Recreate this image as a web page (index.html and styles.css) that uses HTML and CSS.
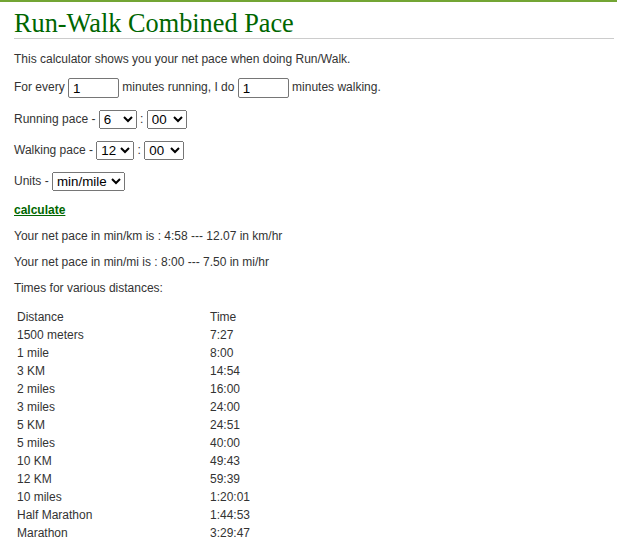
FILE: index.html
```html
<!DOCTYPE html>
<html>
<head>
<meta charset="utf-8">
<title>Run-Walk Combined Pace</title>
<link rel="stylesheet" href="styles.css">
</head>
<body>
<div class="page">
  <h1 class="title">Run-Walk Combined Pace</h1>
  <p>This calculator shows you your net pace when doing Run/Walk.</p>
  <p>For every <input class="num" type="text" value="1"> minutes running, I do <input class="num" type="text" value="1"> minutes walking.</p>
  <p>Running pace - <select class="sel sel-min">
      <option>4</option><option>5</option><option selected>6</option><option>7</option><option>8</option><option>9</option><option>10</option><option>11</option><option>12</option>
    </select> : <select class="sel sel-sec">
      <option selected>00</option><option>15</option><option>30</option><option>45</option>
    </select></p>
  <p>Walking pace - <select class="sel sel-min">
      <option>10</option><option>11</option><option selected>12</option><option>13</option><option>14</option><option>15</option>
    </select> : <select class="sel sel-sec">
      <option selected>00</option><option>15</option><option>30</option><option>45</option>
    </select></p>
  <p>Units - <select class="sel sel-units">
      <option selected>min/mile</option><option>min/km</option>
    </select></p>
  <p><a class="calc" href="#">calculate</a></p>
  <p>Your net pace in min/km is : 4:58 --- 12.07 in km/hr</p>
  <p>Your net pace in min/mi is : 8:00 --- 7.50 in mi/hr</p>
  <p>Times for various distances:</p>
  <table class="times">
    <tr><td class="dist">Distance</td><td>Time</td></tr>
    <tr><td class="dist">1500 meters</td><td>7:27</td></tr>
    <tr><td class="dist">1 mile</td><td>8:00</td></tr>
    <tr><td class="dist">3 KM</td><td>14:54</td></tr>
    <tr><td class="dist">2 miles</td><td>16:00</td></tr>
    <tr><td class="dist">3 miles</td><td>24:00</td></tr>
    <tr><td class="dist">5 KM</td><td>24:51</td></tr>
    <tr><td class="dist">5 miles</td><td>40:00</td></tr>
    <tr><td class="dist">10 KM</td><td>49:43</td></tr>
    <tr><td class="dist">12 KM</td><td>59:39</td></tr>
    <tr><td class="dist">10 miles</td><td>1:20:01</td></tr>
    <tr><td class="dist">Half Marathon</td><td>1:44:53</td></tr>
    <tr><td class="dist">Marathon</td><td>3:29:47</td></tr>
  </table>
</div>
</body>
</html>
```

FILE: styles.css
```css
html, body {
  margin: 0;
  padding: 0;
  background: #fff;
}
body {
  border-top: 2px solid #73a534;
  font-family: "Liberation Sans", Arial, sans-serif;
  font-size: 12px;
  color: #333;
}
.page {
  width: 600px;
  margin-left: 14px;
}
.title {
  margin: 0 0 13px 0;
  padding-top: 8px;
  font-family: "Liberation Serif", "Times New Roman", serif;
  font-size: 26.3px;
  font-weight: normal;
  line-height: 28px;
  color: #006600;
  border-bottom: 1px solid #cccccc;
}
p {
  margin: 12px 0;
}
.num {
  box-sizing: border-box;
  width: 51px;
  height: 20px;
  padding: 1px 4px;
  border: 1px solid #767676;
  border-radius: 2px;
  font-family: "Liberation Sans", Arial, sans-serif;
  font-size: 13.33px;
  color: #000;
  vertical-align: middle;
}
.sel {
  box-sizing: border-box;
  height: 19px;
  font-family: "Liberation Sans", Arial, sans-serif;
  font-size: 13.33px;
  color: #000;
  vertical-align: middle;
}
.sel-min { width: 38px; }
.sel-sec { width: 40px; }
.sel-units { width: 73px; }
.calc {
  font-weight: bold;
  color: #006600;
  text-decoration: underline;
}
.times {
  border-spacing: 2px;
  margin-left: 0;
  font-size: 12px;
  color: #333;
}
.times td {
  padding: 1px;
  line-height: 14px;
}
.times td.dist {
  width: 189px;
}
```
